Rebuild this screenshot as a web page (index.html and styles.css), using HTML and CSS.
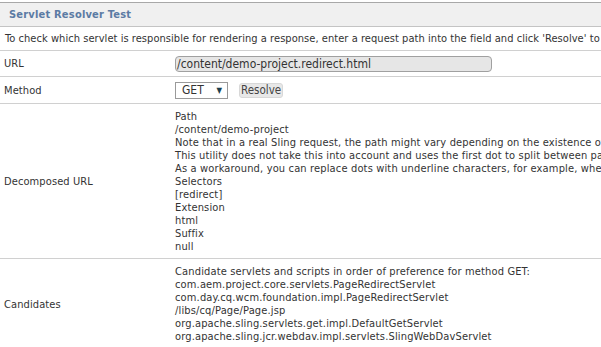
FILE: index.html
```html
<!DOCTYPE html>
<html>
<head>
<meta charset="utf-8">
<link rel="stylesheet" href="styles.css">
</head>
<body>
<div class="panel">
  <div class="panel-head">Servlet Resolver Test</div>
  <div class="desc">To check which servlet is responsible for rendering a response, enter a request path into the field and click 'Resolve' to</div>
  <div class="row row-url">
    <div class="label">URL</div>
    <div class="value"><span class="input">/content/demo-project.redirect.html</span></div>
  </div>
  <div class="row row-method">
    <div class="label">Method</div>
    <div class="value controls"><span class="select"><span>GET</span><span class="arrow">▼</span></span><span class="button">Resolve</span></div>
  </div>
  <div class="row row-text">
    <div class="label">Decomposed URL</div>
    <div class="value lines">
      <div>Path</div>
      <div>/content/demo-project</div>
      <div>Note that in a real Sling request, the path might vary depending on the existence of</div>
      <div>This utility does not take this into account and uses the first dot to split between pat</div>
      <div>As a workaround, you can replace dots with underline characters, for example, wher</div>
      <div>Selectors</div>
      <div>[redirect]</div>
      <div>Extension</div>
      <div>html</div>
      <div>Suffix</div>
      <div>null</div>
    </div>
  </div>
  <div class="row row-text">
    <div class="label">Candidates</div>
    <div class="value lines">
      <div>Candidate servlets and scripts in order of preference for method GET:</div>
      <div>com.aem.project.core.servlets.PageRedirectServlet</div>
      <div>com.day.cq.wcm.foundation.impl.PageRedirectServlet</div>
      <div>/libs/cq/Page/Page.jsp</div>
      <div>org.apache.sling.servlets.get.impl.DefaultGetServlet</div>
      <div>org.apache.sling.jcr.webdav.impl.servlets.SlingWebDavServlet</div>
    </div>
  </div>
</div>
</body>
</html>
```
FILE: styles.css
```css
html, body {
  margin: 0;
  padding: 0;
  background: #fff;
  overflow: hidden;
}
body {
  font-family: "DejaVu Sans Condensed", "DejaVu Sans", sans-serif;
  font-size: 11px;
  letter-spacing: 0.1px;
  color: #333;
  padding-top: 2px;
}
.panel {
  width: 601px;
  overflow: hidden;
}
.panel-head {
  border-top: 1px solid #a8a8a8;
  border-bottom: 1px solid #c4c4c4;
  background: #f0f0f0;
  height: 23px;
  line-height: 24px;
  padding-left: 9px;
  font-weight: bold;
  color: #5b7ba4;
  letter-spacing: 0.2px;
}
.desc {
  height: 23px;
  line-height: 23px;
  padding: 0 5px;
  border-bottom: 1px solid #d0d0d0;
  white-space: nowrap;
  overflow: hidden;
  letter-spacing: 0.05px;
}
.row {
  display: flex;
  align-items: center;
  border-bottom: 1px solid #d0d0d0;
}
.label {
  flex: 0 0 171px;
  box-sizing: border-box;
  padding: 0 4px;
  white-space: nowrap;
}
.value {
  flex: 1;
  min-width: 0;
  padding: 0 4px;
  white-space: nowrap;
  overflow: hidden;
}
.lines {
  letter-spacing: 0.15px;
}
.row-url { height: 25px; }
.row-method { height: 26px; }
.row-text {
  padding: 6px 0 5px;
}
.lines {
  line-height: 13px;
}
.controls {
  display: flex;
  align-items: center;
}
.input {
  display: block;
  box-sizing: border-box;
  width: 317px;
  height: 16px;
  line-height: 14px;
  border: 1px solid #a0a0a0;
  border-radius: 4px;
  background: #e6e6e6;
  font-size: 12px;
  padding-left: 1px;
  color: #333;
  letter-spacing: 0;
}
.select {
  display: inline-flex;
  box-sizing: border-box;
  width: 53px;
  height: 17px;
  border: 1px solid #9a9a9a;
  align-items: center;
  justify-content: space-between;
  padding: 0 5px 0 6px;
  font-size: 12px;
  background: #fff;
  letter-spacing: 0;
}
.arrow {
  font-size: 8px;
  color: #1d3f4e;
}
.button {
  display: inline-block;
  box-sizing: border-box;
  margin-left: 11px;
  height: 15px;
  line-height: 13px;
  padding: 0 1px;
  border: 1px solid #d8d8d8;
  border-radius: 3px;
  background: #e8e8e8;
  font-size: 11.5px;
  letter-spacing: 0;
  color: #444;
}
```
